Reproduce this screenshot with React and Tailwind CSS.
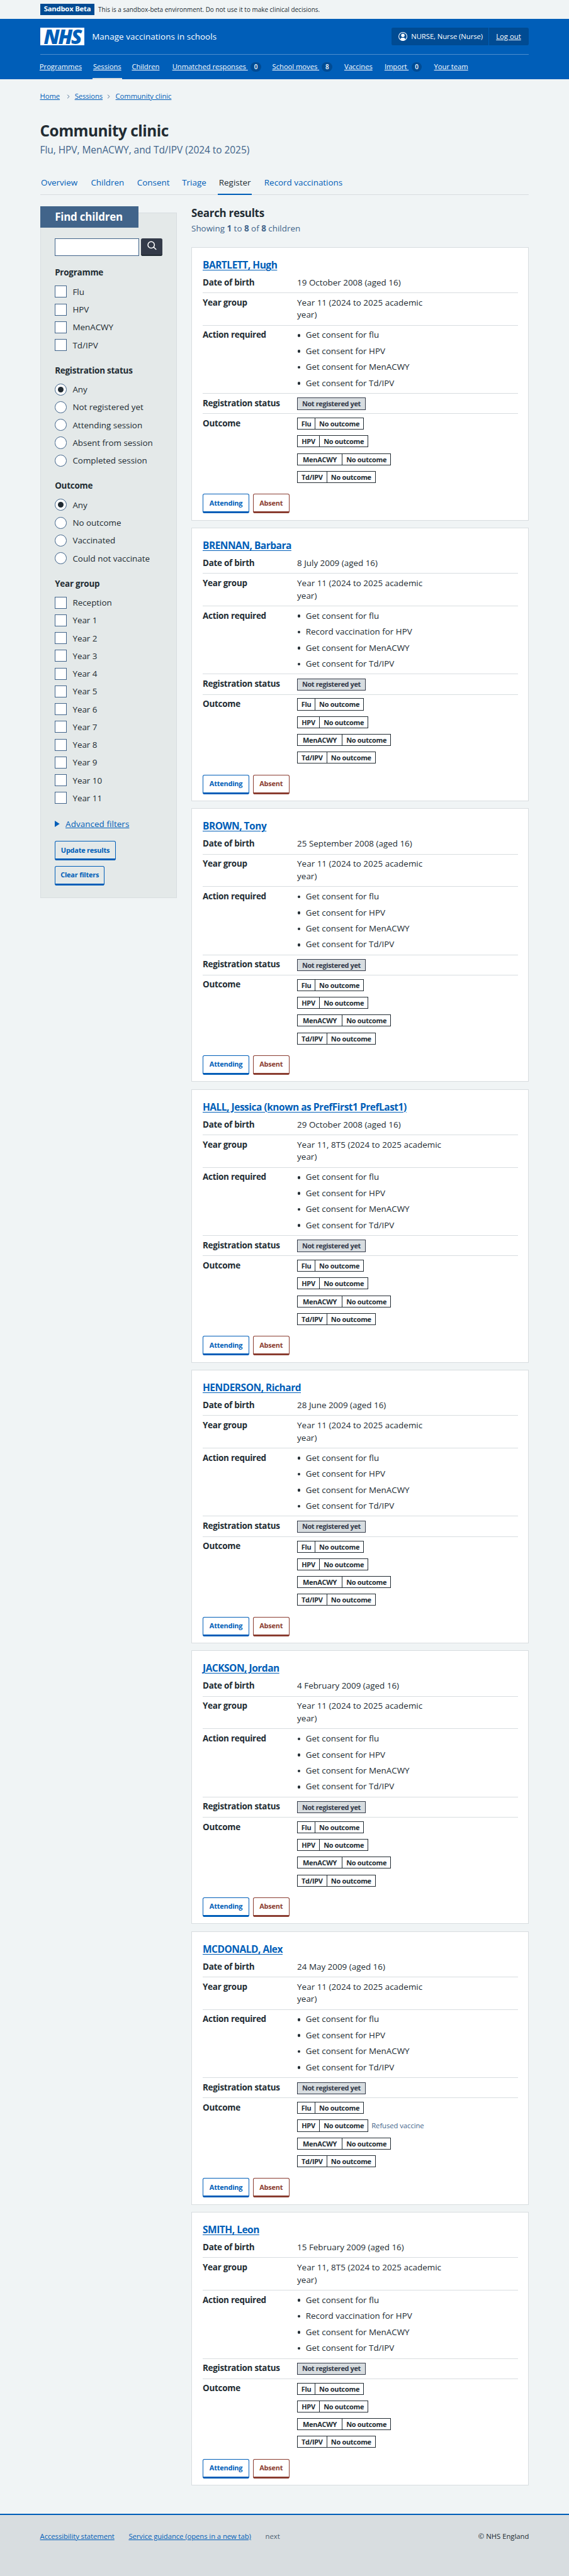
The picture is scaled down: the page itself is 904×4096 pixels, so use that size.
const NAV = [
  { label: "Programmes", width: "w-[120.5px]" },
  { label: "Sessions", width: "w-[87px]", active: true },
  { label: "Children", width: "w-[91px]" },
  { label: "Unmatched responses", width: "w-[225px]", count: 0 },
  { label: "School moves", width: "w-[162px]", count: 8 },
  { label: "Vaccines", width: "w-[90.5px]" },
  { label: "Import", width: "w-[111.5px]", count: 0 },
  { label: "Your team", width: "w-[90px]" },
];

const TABS = [
  { label: "Overview", width: "w-[112.5px]" },
  { label: "Children", width: "w-[104px]" },
  { label: "Consent", width: "w-[101px]" },
  { label: "Triage", width: "w-[83px]" },
  { label: "Register", width: "w-[102px]", active: true },
  { label: "Record vaccinations", width: "w-[190px]" },
];

const FLU = "Get consent for flu";
const HPV = "Get consent for HPV";
const HPV_RECORD = "Record vaccination for HPV";

const CHILDREN = [
  { name: "BARTLETT, Hugh", dob: "19 October 2008 (aged 16)", year: "Year 11", hpv: HPV },
  { name: "BRENNAN, Barbara", dob: "8 July 2009 (aged 16)", year: "Year 11", hpv: HPV_RECORD },
  { name: "BROWN, Tony", dob: "25 September 2008 (aged 16)", year: "Year 11", hpv: HPV },
  { name: "HALL, Jessica (known as PrefFirst1 PrefLast1)", dob: "29 October 2008 (aged 16)", year: "Year 11, 8T5", hpv: HPV },
  { name: "HENDERSON, Richard", dob: "28 June 2009 (aged 16)", year: "Year 11", hpv: HPV },
  { name: "JACKSON, Jordan", dob: "4 February 2009 (aged 16)", year: "Year 11", hpv: HPV },
  { name: "MCDONALD, Alex", dob: "24 May 2009 (aged 16)", year: "Year 11", hpv: HPV, note: "Refused vaccine" },
  { name: "SMITH, Leon", dob: "15 February 2009 (aged 16)", year: "Year 11, 8T5", hpv: HPV_RECORD },
];

const PROGRAMMES = [
  { label: "Flu", width: "w-[39.5px]" },
  { label: "HPV", width: "w-[49.5px]" },
  { label: "MenACWY", width: "w-[100.5px]" },
  { label: "Td/IPV", width: "w-[66px]" },
];

const YEARS = ["Reception", "Year 1", "Year 2", "Year 3", "Year 4", "Year 5", "Year 6", "Year 7", "Year 8", "Year 9", "Year 10", "Year 11"];

function Banner() {
  return (
    <div className="flex h-[42px] items-center px-[90px]">
      <strong className="flex h-[26px] w-[123px] items-center justify-center bg-[#004b93] text-[16px] font-bold tracking-[-0.3px] text-white">Sandbox Beta</strong>
      <span className="ml-2 pt-[2px] text-[14px] tracking-[0.05px]">This is a sandbox-beta environment. Do not use it to make clinical decisions.</span>
    </div>
  );
}

function Header() {
  return (
    <header className="h-[137px] bg-[#005eb8] px-[90px] text-white">
      <div className="flex h-[81px] items-center border-b border-[#4d8ecd]">
        <div className="flex h-10 w-[100px] items-center justify-center bg-white text-[45px] leading-10 font-extrabold tracking-[-3px] text-[#005eb8] italic">NHS</div>
        <span className="ml-[17px] text-[19px] tracking-[0.1px]">Manage vaccinations in schools</span>
        <div className="ml-auto flex h-10 w-[310px] rounded bg-[#004b93] text-[16px] leading-10">
          <div className="flex w-[220px] items-center border-r border-[#005eb8] pl-4">
            <svg className="h-5 w-5" viewBox="0 0 20 20" fill="none">
              <circle cx="10" cy="10" r="9.2" stroke="white" strokeWidth="1.5" />
              <circle cx="10" cy="7.6" r="3.9" fill="white" />
              <path d="M4.6 17.3c0-3 1.6-4.6 3.4-4.6h4c1.8 0 3.4 1.6 3.4 4.6A9 9 0 0 1 10 19a9 9 0 0 1-5.4-1.7Z" fill="white" />
            </svg>
            <span className="ml-[9px] tracking-[-0.1px] whitespace-nowrap">NURSE, Nurse (Nurse)</span>
          </div>
          <a className="ml-4 underline underline-offset-2">Log out</a>
        </div>
      </div>
      <nav className="-ml-[3px] flex h-14 text-[16px]">
        {NAV.map((item) => (
          <div key={item.label} className={item.width}>
            <a className={`inline-flex h-14 items-center border-b-4 px-[2px] pt-[2px] tracking-[-0.1px] whitespace-pre ${item.active ? "border-[#d8dde0]" : "border-transparent"}`}>
              <span className="underline underline-offset-2">{item.count === undefined ? item.label : `${item.label} `}</span>
              {item.count !== undefined && (
                <span className="ml-[6px] flex h-[22px] w-6 items-center justify-center rounded-full bg-[#004b93] text-[14px] font-semibold">{item.count}</span>
              )}
            </a>
          </div>
        ))}
      </nav>
    </header>
  );
}

function Chevron() {
  return (
    <svg className="mr-[10px] ml-auto h-[10px] w-[10px]" viewBox="0 0 10 10" fill="none" stroke="#41648a" strokeWidth="1.3">
      <path d="M3 1l4 4-4 4" />
    </svg>
  );
}

function Choice({ label, radio, checked }) {
  return (
    <label className="flex h-10 items-center">
      <span className={`flex h-[27px] w-[27px] items-center justify-center border-2 border-[#41648a] bg-white ${radio ? "rounded-full" : ""}`}>
        {checked && <span className="h-[13px] w-[13px] rounded-full bg-[#212b32]" />}
      </span>
      <span className="ml-[13px] text-[19px]">{label}</span>
    </label>
  );
}

function Group({ title, options, radio }) {
  return (
    <fieldset className="mb-6">
      <legend className="mb-[2px] h-[34px] text-[19px] leading-[28px] font-bold tracking-[-0.3px]">{title}</legend>
      {options.map((label, i) => (
        <Choice key={label} label={label} radio={radio} checked={radio && i === 0} />
      ))}
    </fieldset>
  );
}

function Button({ children, className }) {
  return (
    <button className={`flex h-11 items-center justify-center rounded-[4px] border-2 border-b-[5px] text-[15.5px] font-bold tracking-[-0.3px] ${className}`}>
      {children}
    </button>
  );
}

function Filters() {
  return (
    <aside className="mt-[15px] h-[1542.5px] w-[308px] border border-[#d8dde0] bg-[#e4e9e9] pl-8">
      <h2 className="-mt-4 -ml-[33px] flex h-12 w-[221px] items-center bg-[#41648a] pl-[33px] text-[24px] font-bold tracking-[-0.3px] text-white">Find children</h2>
      <div className="mt-6 mb-[24.5px] flex">
        <div className="h-10 w-[190px] border-2 border-[#41648a] bg-white" />
        <button className="ml-1 flex h-10 w-12 justify-center rounded-[4px] border-b-4 border-[#212b32] bg-[#333a49] pt-[5px]">
          <svg className="h-6 w-6" viewBox="0 0 24 24" fill="none" stroke="white" strokeWidth="2.2" strokeLinecap="round">
            <circle cx="10.2" cy="10.5" r="7.3" />
            <path d="M15.5 15.5l5.5 5" />
          </svg>
        </button>
      </div>
      <Group title="Programme" options={["Flu", "HPV", "MenACWY", "Td/IPV"]} />
      <Group title="Registration status" radio options={["Any", "Not registered yet", "Attending session", "Absent from session", "Completed session"]} />
      <Group title="Outcome" radio options={["Any", "No outcome", "Vaccinated", "Could not vaccinate"]} />
      <Group title="Year group" options={YEARS} />
      <div className="flex h-7 items-center text-[19px] text-[#005eb8]">
        <svg className="h-[14px] w-[11px]" viewBox="0 0 11 14" fill="#005eb8"><path d="M0 0l11 7-11 7Z" /></svg>
        <span className="ml-[13px] tracking-[0.1px] underline underline-offset-2">Advanced filters</span>
      </div>
      <Button className="mt-[25px] w-[137px] border-[#005eb8] text-[#005eb8]">Update results</Button>
      <Button className="mt-3 w-[112px] border-[#005eb8] text-[#005eb8]">Clear filters</Button>
    </aside>
  );
}

function Row({ label, last, children }) {
  return (
    <div className={`flex py-2 ${last ? "" : "border-b border-[#d8dde0]"}`}>
      <dt className="w-[212.5px] font-bold tracking-[-0.35px]">{label}</dt>
      <dd className="whitespace-nowrap">{children}</dd>
    </div>
  );
}

function Card({ child }) {
  return (
    <article className="mb-4 h-[616px] border border-[#d8dde0] bg-white px-6 pt-6">
      <h3 className="h-[33px] text-[22px] leading-[30px] font-bold tracking-[-0.7px] text-[#005eb8] underline decoration-2 underline-offset-[3px]">{child.name}</h3>
      <dl className="text-[19px] leading-7">
        <Row label="Date of birth">{child.dob}</Row>
        <Row label="Year group">
          <span className="tracking-[0.05px]">
            {child.year} (2024 to 2025 academic
            <br />
            year)
          </span>
        </Row>
        <Row label="Action required">
          <ul className="flex flex-col gap-2">
            {[FLU, child.hpv, "Get consent for MenACWY", "Get consent for Td/IPV"].map((text) => (
              <li key={text} className="flex items-center">
                <span className="mr-[12px] ml-[1px] h-[6.5px] w-[6.5px] rounded-full bg-[#212b32]" />
                {text}
              </li>
            ))}
          </ul>
        </Row>
        <Row label="Registration status">
          <span className="mt-[1px] flex h-[27px] w-[154px] items-center justify-center border border-[#333a49] bg-[#d8dde0] text-[15.5px] font-bold tracking-[-0.5px] text-[#333a49]">Not registered yet</span>
        </Row>
        <Row label="Outcome" last>
          <div className="flex flex-col gap-3">
            {PROGRAMMES.map((programme) => (
              <div key={programme.label} className="flex h-7 items-center text-[16px]">
                <span className="flex h-[27px] border border-[#212b32] text-[15.5px] leading-[25px] font-bold tracking-[-0.4px]">
                  <span className={`border-r border-[#212b32] text-center ${programme.width}`}>{programme.label}</span>
                  <span className="w-[108px] text-center">No outcome</span>
                </span>
                {child.note && programme.label === "HPV" && <span className="ml-[7px] tracking-[-0.1px] text-[#41648a]">{child.note}</span>}
              </div>
            ))}
          </div>
        </Row>
      </dl>
      <div className="mt-4 flex gap-2">
        <Button className="w-[105px] border-[#005eb8] text-[#005eb8]">Attending</Button>
        <Button className="w-[82px] border-[#8a3c30] text-[#8a3c30]">Absent</Button>
      </div>
    </article>
  );
}

export default function App() {
  return (
    <div className="flex h-[5800px] w-[1280px] flex-col bg-[#f0f4f5] font-['Open_Sans','Noto_Sans',sans-serif] text-[#212b32] [zoom:0.70625]">
      <Banner />
      <Header />
      <nav className="mt-[21px] flex h-[26px] items-center px-[90px] pt-2 text-[16px] tracking-[-0.15px] text-[#005eb8]">
        <div className="flex w-[78px] items-center">
          <a className="underline underline-offset-2">Home</a>
          <Chevron />
        </div>
        <div className="flex w-[92px] items-center">
          <a className="underline underline-offset-2">Sessions</a>
          <Chevron />
        </div>
        <a className="underline underline-offset-2">Community clinic</a>
      </nav>
      <div className="mt-[45px] px-[90px]">
        <h1 className="text-[34.5px] leading-[48px] font-bold tracking-[-0.7px]">Community clinic</h1>
        <p className="h-[35px] pt-[1px] text-[22px] leading-[36px] tracking-[-0.1px] text-[#41648a]">Flu, HPV, MenACWY, and Td/IPV (2024 to 2025)</p>
        <nav className="mt-[27px] flex h-[58px] border-b border-[#d8dde0] text-[19px] text-[#005eb8]">
          {TABS.map((tab) => (
            <div key={tab.label} className={tab.width}>
              <a className={`inline-flex h-[58px] items-center border-b-4 px-[2px] pt-[3px] whitespace-nowrap ${tab.active ? "border-[#005eb8] text-[#212b32]" : "border-transparent"}`}>{tab.label}</a>
            </div>
          ))}
        </nav>
      </div>
      <main className="mt-[25px] flex justify-between px-[90px]">
        <Filters />
        <section className="w-[759.5px]">
          <h2 className="h-[34px] text-[24px] leading-[32px] font-bold tracking-[-0.4px]">Search results</h2>
          <p className="mb-[26px] h-8 text-[19px] leading-8 text-[#41648a]">
            Showing <b>1</b> to <b>8</b> of <b>8</b> children
          </p>
          {CHILDREN.map((child) => (
            <Card key={child.name} child={child} />
          ))}
        </section>
      </main>
      <footer className="mt-[48px] flex-1 border-t-4 border-[#005eb8] bg-[#d8dde0] px-[90px] pt-8 text-[16px]">
        <div className="flex h-6 items-center pt-2 text-[#005eb8]">
          <a className="mr-8 tracking-[-0.1px] underline underline-offset-2">Accessibility statement</a>
          <a className="mr-8 tracking-[-0.1px] underline underline-offset-2">Service guidance (opens in a new tab)</a>
          <span className="text-[#4c6272]">next</span>
          <span className="ml-auto text-[#212b32]">© NHS England</span>
        </div>
      </footer>
    </div>
  );
}
